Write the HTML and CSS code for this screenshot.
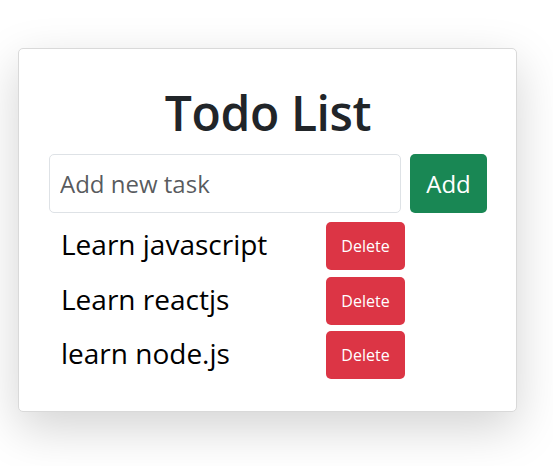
FILE: index.html
```html
<!DOCTYPE html>
<html lang="en">
<head>
<meta charset="utf-8">
<title>Todo List</title>
<link rel="stylesheet" href="styles.css">
</head>
<body>
<div class="card">
  <h1 class="title">Todo List</h1>
  <form class="add-form">
    <input class="task-input" type="text" placeholder="Add new task">
    <button class="btn btn-add" type="button">Add</button>
  </form>
  <ul class="tasks">
    <li class="task"><span class="task-text">Learn javascript</span><button class="btn btn-delete" type="button">Delete</button></li>
    <li class="task"><span class="task-text">Learn reactjs</span><button class="btn btn-delete" type="button">Delete</button></li>
    <li class="task"><span class="task-text">learn node.js</span><button class="btn btn-delete" type="button">Delete</button></li>
  </ul>
</div>
</body>
</html>
```
FILE: styles.css
```css
html, body {
  margin: 0;
  padding: 0;
  background: #fff;
  font-family: "Open Sans", "Noto Sans", sans-serif;
}

body {
  min-height: 100vh;
  box-sizing: border-box;
  padding-top: 48px;
}

.card {
  box-sizing: border-box;
  width: 499px;
  margin: 0 0 0 18px;
  padding: 34px 29px 32px 30px;
  border: 1px solid #d9d9d9;
  border-radius: 5px;
  background: #fff;
  box-shadow: 0 16px 48px rgba(0, 0, 0, 0.175);
}

.title {
  margin: 0;
  text-align: center;
  font-size: 48px;
  line-height: 60px;
  font-weight: 600;
  letter-spacing: -0.4px;
  color: #212529;
}

.add-form {
  display: flex;
  gap: 9px;
  margin: 11px 0 0 0;
}

.task-input {
  flex: 1;
  box-sizing: border-box;
  height: 59px;
  min-width: 0;
  padding: 0 10px;
  border: 1px solid #dee2e6;
  border-radius: 5px;
  font-family: inherit;
  font-size: 24px;
  color: #212529;
  outline: none;
}

.task-input::placeholder {
  color: rgba(33, 37, 41, 0.75);
}

.btn {
  border: none;
  color: #fff;
  font-family: inherit;
  cursor: pointer;
  border-radius: 5px;
  padding: 0;
}

.btn-add {
  width: 77px;
  height: 59px;
  background: #198754;
  font-size: 24px;
}

.tasks {
  list-style: none;
  margin: 9px 0 0 0;
  padding: 0 0 0 12px;
  display: flex;
  flex-direction: column;
  gap: 6.5px;
}

.task {
  display: grid;
  grid-template-columns: 265px 79px;
  align-items: center;
  height: 48px;
}

.task-text {
  font-size: 28px;
  color: #000;
  padding-bottom: 4px;
}

.btn-delete {
  width: 79px;
  height: 48px;
  background: #dc3545;
  font-size: 16px;
}
```
